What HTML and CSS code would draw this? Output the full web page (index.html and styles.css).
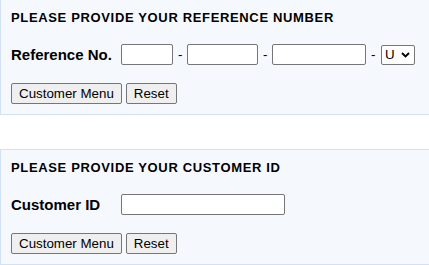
FILE: index.html
```html
<!DOCTYPE html>
<html>
<head>
<meta charset="utf-8">
<link rel="stylesheet" href="styles.css">
</head>
<body>
<div class="page">
  <form class="panel panel-ref">
    <h2 class="panel-title">PLEASE PROVIDE YOUR REFERENCE NUMBER</h2>
    <div class="field-row">
      <label class="field-label">Reference No.</label>
      <input class="text-input w-ref1" type="text">
      <span class="sep">-</span>
      <input class="text-input w-ref2" type="text">
      <span class="sep">-</span>
      <input class="text-input w-ref3" type="text">
      <span class="sep">-</span>
      <span class="select-wrap">
        <select class="select-input"><option>U</option></select>
        <svg class="chev" width="9" height="6" viewBox="0 0 9 6"><path d="M1 1 L4.5 4.5 L8 1" fill="none" stroke="#000" stroke-width="1.8"/></svg>
      </span>
    </div>
    <div class="button-row">
      <button type="button" class="btn">Customer Menu</button>
      <button type="reset" class="btn">Reset</button>
    </div>
  </form>
  <form class="panel panel-cust">
    <h2 class="panel-title">PLEASE PROVIDE YOUR CUSTOMER ID</h2>
    <div class="field-row">
      <label class="field-label">Customer ID</label>
      <input class="text-input w-cust" type="text">
    </div>
    <div class="button-row">
      <button type="button" class="btn">Customer Menu</button>
      <button type="reset" class="btn">Reset</button>
    </div>
  </form>
</div>
</body>
</html>
```

FILE: styles.css
```css
html, body {
  margin: 0;
  padding: 0;
  overflow: hidden;
  background: #ffffff;
}
body {
  font-family: "Liberation Sans", Arial, sans-serif;
  color: #000;
}
.page {
  margin-top: -1px;
  display: flex;
  flex-direction: column;
  gap: 34px;
}
.panel {
  margin: 0;
  background: #f5f9fe;
  border: 1px solid #d2e2f4;
  border-right: 0;
  padding: 10px 10px 10px 10px;
  display: flex;
  flex-direction: column;
}
.panel-title {
  margin: 0;
  font-size: 13px;
  font-weight: bold;
  line-height: 16px;
  letter-spacing: 0.65px;
}
.field-row {
  margin-top: 18px;
  display: flex;
  align-items: center;
  gap: 5px;
  height: 21px;
}
.field-label {
  width: 105px;
  font-size: 15px;
  font-weight: bold;
}
.sep {
  font-size: 13.33px;
  width: 4px;
  text-align: center;
}
.text-input {
  box-sizing: border-box;
  height: 21px;
  border: 1px solid #767676;
  border-radius: 2px;
  background: #fff;
  padding: 1px 2px;
  margin: 0;
  font-family: "Liberation Sans", Arial, sans-serif;
  font-size: 13.33px;
}
.w-ref1 { width: 52px; }
.w-ref2 { width: 71px; }
.w-ref3 { width: 94px; }
.w-cust { width: 164px; }
.select-wrap {
  position: relative;
  display: inline-flex;
  margin-left: 1px;
}
.select-input {
  box-sizing: border-box;
  width: 34px;
  height: 20px;
  margin: 0;
  padding: 0 0 0 3px;
  -webkit-appearance: none;
  appearance: none;
  font-family: "Liberation Sans", Arial, sans-serif;
  font-size: 13.33px;
  border: 1px solid #767676;
  border-radius: 2px;
  background: #fff;
  color: #000;
}
.chev {
  position: absolute;
  right: 5px;
  top: 7px;
  pointer-events: none;
}
.button-row {
  margin-top: 18px;
  display: flex;
  gap: 4px;
}
.btn {
  box-sizing: border-box;
  height: 21px;
  margin: 0;
  padding: 1px 7px;
  font-family: "Liberation Sans", Arial, sans-serif;
  font-size: 13.33px;
  color: #000;
  background: #efefef;
  border: 1px solid #767676;
  border-radius: 2px;
}
```
